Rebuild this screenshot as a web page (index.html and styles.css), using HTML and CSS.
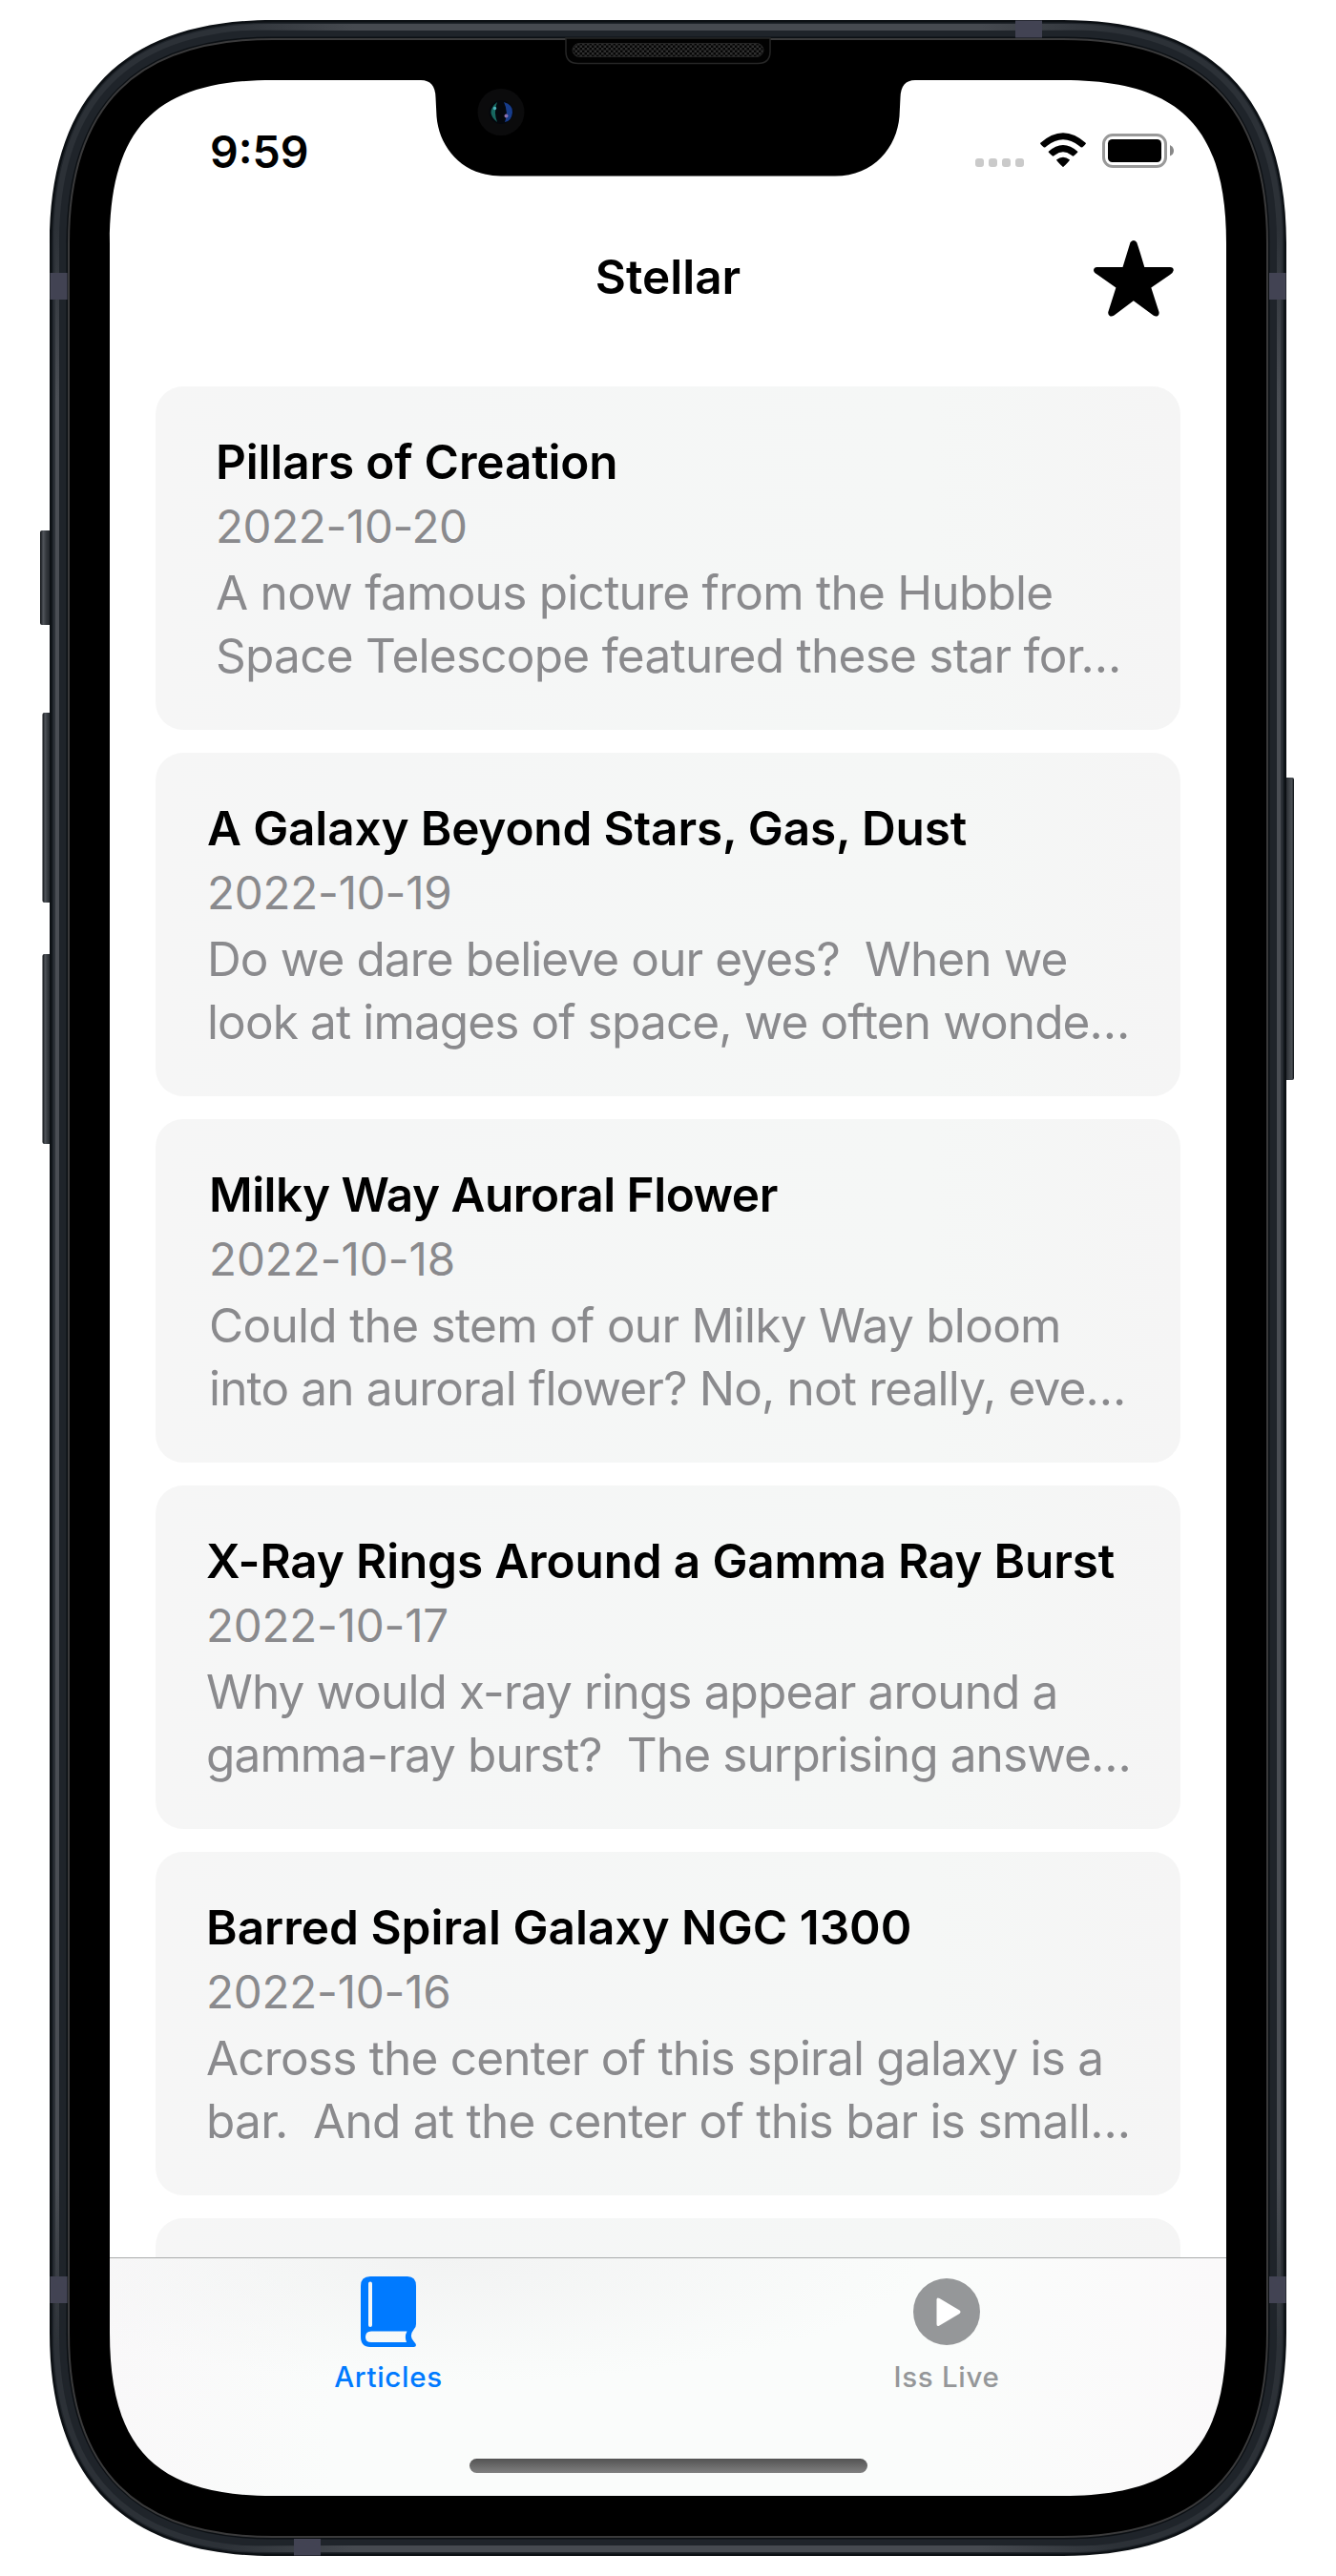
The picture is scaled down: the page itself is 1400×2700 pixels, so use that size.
FILE: index.html
```html
<!DOCTYPE html>
<html lang="en">
<head>
<meta charset="utf-8">
<title>Stellar</title>
<link rel="stylesheet" href="styles.css">
</head>
<body>
<div class="device">
  <div class="screen">
    <div class="status">
      <span class="time">9:59</span>
      <svg class="indicators" width="210" height="40" viewBox="1021 137 210 40">
        <g fill="#cacaca"><rect x="1022" y="166" width="9" height="9" rx="3"/><rect x="1036" y="166" width="9" height="9" rx="3"/><rect x="1050" y="166" width="9" height="9" rx="3"/><rect x="1064" y="166" width="9" height="9" rx="3"/></g>
        <path d="M1090 150Q1114 128.500 1138 150Q1138 151 1134 154.500Q1132.500 154.500 1131 153Q1114 139.500 1097 153Q1095 155 1094 154.500Q1090 151 1090 150Z"/>
        <path d="M1098.500 159Q1114 145 1129.500 159Q1129 160 1125 163.500Q1124 164 1122.500 162.500Q1114 156 1105.500 162.500Q1104 164 1103 163.500Q1099 160 1098.500 159Z"/>
        <path d="M1107 167.500Q1114 162 1121 167.500Q1121 168.500 1114.500 174.800Q1114 175 1113.500 174.800Q1107 168.500 1107 167.500Z"/>
        <rect x="1156.500" y="141.500" width="65" height="33" rx="9.500" fill="none" stroke="#999" stroke-width="3"/>
        <rect x="1161" y="146" width="56" height="24" rx="4.500"/>
        <path d="M1226 152Q1230 154 1230 158T1226 163.500Z" fill="#888"/>
      </svg>
    </div>
    <header class="nav">
      <h1 class="nav-title">Stellar</h1>
      <svg class="star" width="84" height="80" viewBox="1146 252 84 80"><path d="M1184.500 254Q1188 250 1191.200 254Q1194 262 1199.300 280H1226Q1230 280 1229.700 283.500Q1229.500 285.500 1226 288L1206.300 301.500L1214.500 327Q1215 330 1213 331.200Q1211 332.200 1208.500 330.500L1187.800 315.300L1167.500 330.500Q1165 332.200 1163 331.200Q1160.800 330 1161.300 327L1169.400 301.500L1149.500 287.500Q1146 285.500 1146 283Q1146.500 280 1149.500 280H1176.500Z"/></svg>
    </header>
    <main class="list">
      <article class="card c1"><h2>Pillars of Creation</h2><time>2022-10-20</time><p><span class="l1">A now famous picture from the Hubble</span><span class="l2">Space Telescope featured these star for…</span></p></article>
      <article class="card c2"><h2>A Galaxy Beyond Stars, Gas, Dust</h2><time>2022-10-19</time><p><span class="l1">Do we dare believe our eyes?&nbsp; When we</span><span class="l2">look at images of space, we often wonde…</span></p></article>
      <article class="card c3"><h2>Milky Way Auroral Flower</h2><time>2022-10-18</time><p><span class="l1">Could the stem of our Milky Way bloom</span><span class="l2">into an auroral flower? No, not really, eve…</span></p></article>
      <article class="card c4"><h2>X-Ray Rings Around a Gamma Ray Burst</h2><time>2022-10-17</time><p><span class="l1">Why would x-ray rings appear around a</span><span class="l2">gamma-ray burst?&nbsp; The surprising answe…</span></p></article>
      <article class="card c5"><h2>Barred Spiral Galaxy NGC 1300</h2><time>2022-10-16</time><p><span class="l1">Across the center of this spiral galaxy is a</span><span class="l2">bar.&nbsp; And at the center of this bar is small…</span></p></article>
      <article class="card"></article>
    </main>
    <nav class="tabs">
      <a class="tab active">
        <svg width="58" height="74" viewBox="378 2386 58 74"><path fill="#007aff" fill-rule="evenodd" d="M388 2386H427Q436 2386 436 2396V2436Q436 2439 434 2441Q428 2448.500 433.500 2454L435.500 2456.500Q437 2460 433.500 2460H388Q378 2460 378 2449V2396Q378 2386 388 2386ZM388 2391.500Q386 2391.500 386 2393.500V2437Q386 2439 388 2439T390 2437V2393.500Q390 2391.500 388 2391.500ZM389 2443.500Q383 2443.500 383 2449.500Q383 2455 389 2455H426Q423.500 2449 426.500 2443.500Z"/></svg>
        <span>Articles</span>
      </a>
      <a class="tab">
        <svg width="70" height="74" viewBox="957 2386 70 74"><circle cx="992" cy="2423" r="35" fill="#959799"/><path fill="#fff" d="M981.500 2410.500Q981.500 2407.500 984.500 2409L1005.500 2421.500Q1007.500 2423 1005.500 2425L984.500 2437.500Q981.500 2439 981.500 2436Z"/></svg>
        <span>Iss Live</span>
      </a>
    </nav>
    <div class="home"></div>
  </div>
  <svg class="frame" width="1400" height="2700" viewBox="0 0 1400 2700">
    <defs>
      <linearGradient id="btn"><stop offset="0" stop-color="#0c0f13"/><stop offset=".25" stop-color="#50545a"/><stop offset=".5" stop-color="#34383d"/><stop offset="1" stop-color="#15191e"/></linearGradient>
      <linearGradient id="btnRight"><stop offset="0" stop-color="#15191e"/><stop offset=".5" stop-color="#3a3e43"/><stop offset=".8" stop-color="#4b5055"/><stop offset="1" stop-color="#0c0f13"/></linearGradient>
      <linearGradient id="shineX" gradientUnits="userSpaceOnUse" x1="230" y1="0" x2="1170" y2="0"><stop offset="0" stop-color="#464a50" stop-opacity="0"/><stop offset=".15" stop-color="#464a50"/><stop offset=".85" stop-color="#464a50"/><stop offset="1" stop-color="#464a50" stop-opacity="0"/></linearGradient>
      <linearGradient id="shineY" gradientUnits="userSpaceOnUse" x1="0" y1="240" x2="0" y2="2460"><stop offset="0" stop-color="#4a4e54" stop-opacity="0"/><stop offset=".08" stop-color="#4a4e54"/><stop offset=".92" stop-color="#4a4e54"/><stop offset="1" stop-color="#4a4e54" stop-opacity="0"/></linearGradient>
      <pattern id="mesh" width="5" height="5" patternUnits="userSpaceOnUse"><rect width="5" height="5" fill="#050505"/><path d="M0 0h2.500v2.500h-2.500zM2.500 2.500h2.500v2.500h-2.500z" fill="#303030"/></pattern>
      <path id="outer" d="M286 21H1114C1269 21 1348 100 1348 255V2445C1348 2600 1269 2679 1114 2679H286C131 2679 52 2600 52 2445V255C52 100 131 21 286 21Z"/>
      <clipPath id="body"><use href="#outer"/></clipPath>
    </defs>
    <g fill="url(#btn)"><rect x="42" y="556" width="13" height="99" rx="2"/><rect x="44.500" y="747" width="11" height="199" rx="2"/><rect x="44.500" y="1000" width="11" height="199" rx="2"/></g>
    <rect x="1345" y="815" width="11" height="317" rx="2" fill="url(#btnRight)"/>
    <path fill="#0c1014" fill-rule="evenodd" d="M286 21H1114C1269 21 1348 100 1348 255V2445C1348 2600 1269 2679 1114 2679H286C131 2679 52 2600 52 2445V255C52 100 131 21 286 21ZM286 70C155 70 101 124 101 255V2445C101 2576 155 2630 286 2630H1114C1245 2630 1299 2576 1299 2445V255C1299 124 1245 70 1114 70Z"/>
    <g fill="none" clip-path="url(#body)">
      <path d="M286 31H1114C1263 31 1338 106 1338 255V2445C1338 2594 1263 2669 1114 2669H286C137 2669 62 2594 62 2445V255C62 106 137 31 286 31Z" stroke="#1f242a" stroke-width="15"/>
      <path d="M286 28H1114C1265 28 1341 104 1341 255V2445C1341 2596 1265 2672 1114 2672H286C135 2672 59 2596 59 2445V255C59 104 135 28 286 28Z" stroke="#2c3137" stroke-width="6"/>
    </g>
    <g fill="url(#shineX)"><rect x="230" y="25" width="940" height="7"/><rect x="230" y="2668" width="940" height="7"/></g>
    <g fill="url(#shineY)"><rect x="1338" y="240" width="4" height="2220"/><rect x="58" y="240" width="4" height="2220"/></g>
    <path fill="#000" fill-rule="evenodd" d="M286 41H1114C1258 41 1328 111 1328 255V2445C1328 2589 1258 2659 1114 2659H286C142 2659 72 2589 72 2445V255C72 111 142 41 286 41ZM286 84C164 84 115 133 115 255V2445C115 2567 164 2616 286 2616H1114C1236 2616 1285 2567 1285 2445V255C1285 133 1236 84 1114 84H959Q944 84 943.500 102L942.500 122C940 154 916 184.500 875 184.500H525C484 184.500 460 154 457.500 122L456.500 102Q456 84 441 84Z"/>
    <path fill="none" stroke="#3a3a3b" stroke-width="2" d="M286 41H1114C1258 41 1328 111 1328 255V2445C1328 2589 1258 2659 1114 2659H286C142 2659 72 2589 72 2445V255C72 111 142 41 286 41Z"/>
    <g fill="#424353"><rect x="52.500" y="286" width="18" height="28"/><rect x="1330" y="286" width="17.500" height="28"/><rect x="52.500" y="2386" width="18" height="28"/><rect x="1330" y="2386" width="17.500" height="28"/><rect x="1064" y="21.500" width="28" height="18"/><rect x="308" y="2661" width="28" height="17.500"/></g>
    <path d="M593 40V54Q593 66.500 606 66.500H794Q807 66.500 807 54V40Z" fill="#020202" stroke="#262626" stroke-width="1.500"/>
    <rect x="600" y="45.500" width="200" height="14" rx="7" fill="url(#mesh)" stroke="#242424"/>
    <circle cx="525" cy="117.500" r="24.500" fill="#0b0b0c"/>
    <circle cx="525" cy="117.500" r="12.500" fill="#04070d"/>
    <path d="M521 107Q508 117.500 521 128Q517 117.500 521 107Z" fill="#17665f"/>
    <path d="M528 107Q538 110 537 118Q536 127 529 128Q533 117.500 528 107Z" fill="#173c8b"/>
    <circle cx="518.500" cy="113.500" r="1.700" fill="#4fb4bd"/><circle cx="530.500" cy="121.500" r="2" fill="#8a70b0"/>
  </svg>
</div>
</body>
</html>
```
FILE: styles.css
```css
* { box-sizing: border-box; }
body { margin: 0; background: #fff; font-family: Inter, "Liberation Sans", sans-serif; color: #000; }
.device { position: relative; width: 1400px; height: 2700px; padding: 84px 115px; overflow: hidden; }
.screen { position: relative; display: flex; flex-direction: column; width: 1170px; height: 2532px; background: #fff; overflow: hidden; border-radius: 110px; }
/* hardware bezel lies over the display */
.frame { position: absolute; inset: 0; }
.status { display: flex; justify-content: space-between; align-items: center; height: 140px; padding: 8px 54px 0 105px; }
.time { font-size: 46.500px; font-weight: 600; line-height: 56px; padding-top: 1px; }
.indicators { margin-top: -2px; }
.nav { display: grid; grid-template-columns: 1fr auto 1fr; align-items: center; height: 181px; padding: 0 55px 46px; }
.nav-title { grid-column: 2; margin: 0 0 3px; font-size: 49.500px; line-height: 60px; font-weight: 600; }
.star { justify-self: end; margin-top: 1px; }
.list { display: flex; flex-direction: column; gap: 24px; height: 1961px; padding: 0 48px; overflow: hidden; }
.card { flex: none; display: flex; flex-direction: column; height: 360px; padding: 45px 0 0 63px; border-radius: 29px; background: linear-gradient(90deg, #f6f6f6, #f5f6f6 20%, #f5f7f6 75%, #f5f5f5); white-space: nowrap; }
.card h2 { margin: 0; font-size: 49.500px; font-weight: 600; line-height: 68px; letter-spacing: -0.160px; }
.card time { font-size: 47.500px; line-height: 68px; color: #8a8a8d; letter-spacing: -0.200px; }
.card p { display: flex; flex-direction: column; margin: 2px 0 0; font-size: 49.500px; line-height: 66px; color: #8a8a8d; letter-spacing: -0.880px; }
.card span, .card h2, .card time { width: max-content; }
.c1 time { letter-spacing: -0.350px; }
.c1 p { letter-spacing: -0.730px; }
.c2 { padding-left: 54px; }
.c3 { padding-left: 56px; }
.c3 h2 { letter-spacing: -0.500px; }
.c3 time { letter-spacing: -0.050px; }
.c3 .l1 { letter-spacing: -0.700px; }
.c3 .l2 { letter-spacing: -0.840px; }
.c4 { padding-left: 53px; }
.c5 { padding-left: 53px; }
.c5 h2 { letter-spacing: 0; }
.c5 .l1 { letter-spacing: -0.780px; }
.c5 .l2 { letter-spacing: -0.710px; }
.tabs { display: flex; flex: 1; border-top: 1.500px solid #a9abab; background: radial-gradient(ellipse 500px 130px at 350px 0, #f2f3f3, rgba(250,251,251,0)), linear-gradient(90deg, #f9f8f9, #fafcfb 20%, #fafcfb 75%, #faf9fa); }
.tab { flex: 1; display: flex; flex-direction: column; align-items: center; padding: 19px 1px 0 0; color: #959799; font-size: 29.500px; font-weight: 500; line-height: 36px; letter-spacing: 0.700px; }
.tab span { margin-top: 13px; }
.tab.active { color: #007aff; }
.home { position: absolute; left: 377px; bottom: 24px; width: 417px; height: 15px; border-radius: 7.500px; background: linear-gradient(#535353, #808080); }
```
